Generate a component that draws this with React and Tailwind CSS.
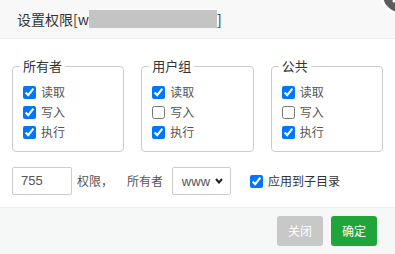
import React from "react";

const font = { fontFamily: '"Noto Sans CJK SC", "Liberation Sans", sans-serif' };

function Row({ label, checked }) {
  return (
    <label className="flex items-center h-[20px] text-[12px] text-[#555]">
      <input type="checkbox" defaultChecked={checked} className="w-[13px] h-[13px]" />
      <span className="ml-[5px] leading-none">{label}</span>
    </label>
  );
}

function Group({ title, rows }) {
  return (
    <fieldset className="w-[113px] border border-[#ccc] rounded-[4px] pl-[10px] pr-[6px] pt-[7px] pb-[9px]">
      <legend className="px-[3px] text-[13px] leading-[18px] text-[#333] -ml-[3px]">{title}</legend>
      {rows.map(([l, c]) => (
        <Row key={l} label={l} checked={c} />
      ))}
    </fieldset>
  );
}

export default function App() {
  return (
    <div className="relative w-[395px] h-[254px] bg-white overflow-hidden" style={font}>
      <div className="h-[39px] bg-[#f8f8f8] border-b border-[#eee] flex items-center pl-[17px] text-[14px] text-[#333]">
        <span>设置权限[w</span>
        <span className="inline-block w-[128px] h-[18px] bg-[#c4c4c4]"></span>
        <span>]</span>
      </div>
      <div className="absolute left-[380px] top-[-25px] w-[40px] h-[40px] rounded-full bg-[#5c5c5c] border-[3px] border-white overflow-hidden">
        <svg width="34" height="34" viewBox="0 0 34 34" className="block">
          <path d="M10 10 L24 24 M24 10 L10 24" stroke="white" strokeWidth="2.5" />
        </svg>
      </div>
      <div className="px-[12px] pt-[18px]">
        <div className="flex gap-[17px]">
          <Group title="所有者" rows={[["读取", true], ["写入", true], ["执行", true]]} />
          <Group title="用户组" rows={[["读取", true], ["写入", false], ["执行", true]]} />
          <Group title="公共" rows={[["读取", true], ["写入", false], ["执行", true]]} />
        </div>
        <div className="flex items-center mt-[15px] h-[28px] text-[12px] text-[#555]">
          <div className="w-[60px] h-[28px] border border-[#ccc] rounded-[2px] flex items-center pl-[8px] text-[13px] text-[#555]" style={{ fontFamily: '"Liberation Sans", sans-serif' }}>
            755
          </div>
          <span className="ml-[5px]">权限，</span>
          <span className="ml-[14px]">所有者</span>
          <div className="ml-[9px] w-[59px] h-[28px] border border-[#ccc] rounded-[2px] flex items-center justify-end pr-[7px] gap-[5px]">
            <span className="text-[13px] text-[#555] leading-none" style={{ fontFamily: '"Liberation Sans", sans-serif' }}>www</span>
            <svg width="8" height="6" viewBox="0 0 8 6">
              <path d="M1 1 L4 4.5 L7 1" stroke="#222" strokeWidth="2" fill="none" />
            </svg>
          </div>
          <label className="ml-[19px] flex items-center">
            <input type="checkbox" defaultChecked className="w-[13px] h-[13px]" />
            <span className="ml-[5px] text-[12px] text-[#333]">应用到子目录</span>
          </label>
        </div>
      </div>
      <div className="absolute left-0 right-0 bottom-0 h-[47px] bg-[#f6f7f7] border-t border-[#eee] flex justify-end items-start pt-[8px] pr-[18px] gap-[8px]">
        <button className="w-[46px] h-[30px] rounded-[3px] bg-[#c8c8c8] text-white text-[12px]">关闭</button>
        <button className="w-[46px] h-[30px] rounded-[3px] bg-[#20a53a] text-white text-[12px]">确定</button>
      </div>
    </div>
  );
}
